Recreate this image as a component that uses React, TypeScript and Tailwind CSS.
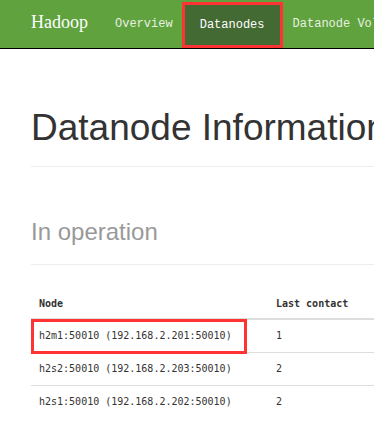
import React from "react";

const mono = { fontFamily: '"Liberation Mono", "DejaVu Sans Mono", monospace' };
const tableMono = { fontFamily: '"DejaVu Sans Mono", "Liberation Mono", monospace' };

export default function App() {
  const rows = [
    { node: "h2m1:50010 (192.168.2.201:50010)", last: "1", mark: true },
    { node: "h2s2:50010 (192.168.2.203:50010)", last: "2", mark: false },
    { node: "h2s1:50010 (192.168.2.202:50010)", last: "2", mark: false },
  ];
  return (
    <div className="w-[374px] h-[441px] overflow-hidden bg-white" style={{ fontFamily: '"Liberation Sans", Arial, sans-serif' }}>
      <nav className="flex h-[49px] items-stretch overflow-hidden border-b border-black bg-[#5fa23e] whitespace-nowrap">
        <div className="ml-[31px] flex shrink-0 items-center pb-[3px] text-[18px] text-white" style={{ fontFamily: '"Liberation Serif", serif' }}>
          Hadoop
        </div>
        <div className="ml-[27px] flex shrink-0 items-center text-[12px] text-[#e8f0e0]" style={mono}>
          Overview
        </div>
        <div className="ml-[9px] mt-[2px] flex w-[101px] shrink-0 items-center justify-center border-[3px] border-[#ff3333] bg-[#446a33] pb-[1px] text-[12px] text-white" style={mono}>
          Datanodes
        </div>
        <div className="ml-[10px] flex shrink-0 items-center text-[12px] text-[#e8f0e0]" style={mono}>
          Datanode Volume Failures
        </div>
      </nav>

      <div className="pl-[31px]">
        <h1 className="mt-[59px] whitespace-nowrap text-[37px] leading-[40px] text-[#333]">Datanode Information</h1>
        <div className="mt-[18px] h-px bg-[#eee]" />
        <h2 className="mt-[51px] text-[24px] leading-[28px] text-[#999]">In operation</h2>
        <div className="mt-[18px] h-px bg-[#eee]" />

        <table className="mt-[23px] w-full border-collapse text-[10px] text-[#333]" style={tableMono}>
          <thead>
            <tr className="border-b-2 border-[#ddd]">
              <th className="h-[31px] w-[237px] px-[8px] text-left font-bold">Node</th>
              <th className="px-[8px] text-left font-bold whitespace-nowrap">Last contact</th>
            </tr>
          </thead>
          <tbody>
            {rows.map((r, i) => (
              <tr key={i} className={i < rows.length - 1 ? "border-b border-[#ddd]" : ""}>
                <td className="relative h-[33px] px-[8px] whitespace-nowrap">
                  {r.node}
                  {r.mark && (
                    <div className="pointer-events-none absolute left-0 top-[-1px] h-[35px] w-[216px] border-[3px] border-[#ff3333]" />
                  )}
                </td>
                <td className="px-[8px]">{r.last}</td>
              </tr>
            ))}
          </tbody>
        </table>
      </div>
    </div>
  );
}
